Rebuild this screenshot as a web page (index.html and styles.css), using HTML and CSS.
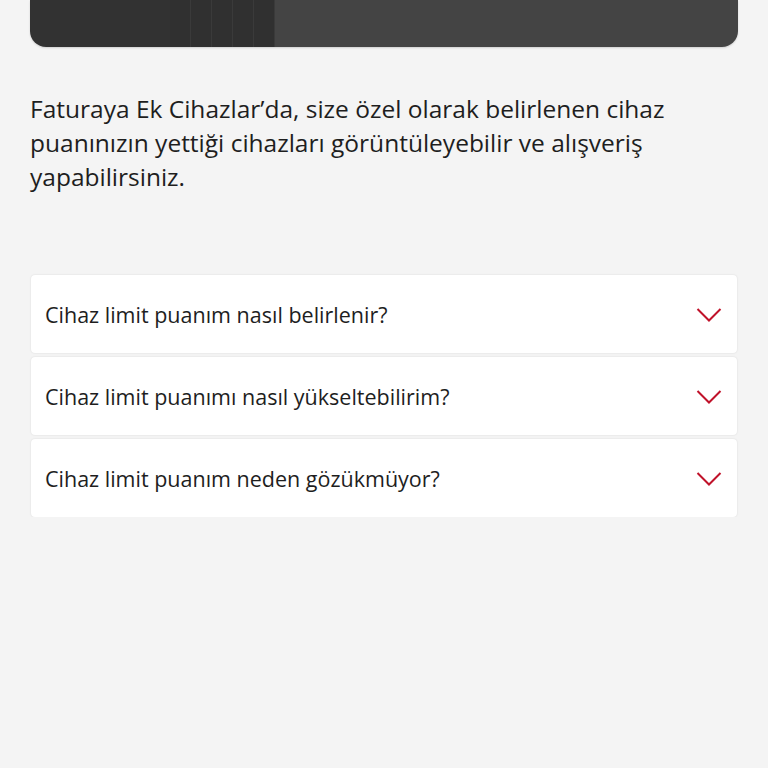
FILE: index.html
```html
<!DOCTYPE html>
<html lang="tr">
<head>
    <meta charset="UTF-8">
    <meta name="viewport" content="width=device-width, initial-scale=1.0">
    <title>Faturaya Ek Cihazlar</title>
    <link rel="stylesheet" href="styles.css">
</head>
<body>
    <div class="page">
        <div class="banner">
            <div class="banner_left"></div>
            <div class="banner_stripes">
                <span></span><span></span><span></span><span></span><span></span>
            </div>
            <div class="banner_right"></div>
        </div>
        <p class="intro">Faturaya Ek Cihazlar’da, size özel olarak belirlenen cihaz puanınızın yettiği cihazları görüntüleyebilir ve alışveriş yapabilirsiniz.</p>
        <div class="faq">
            <div class="faq_item">
                <p>Cihaz limit puanım nasıl belirlenir?</p>
                <svg class="chevron" viewBox="0 0 26 16"><path d="M1.5 2 L13 13.5 L24.5 2" /></svg>
            </div>
            <div class="faq_item">
                <p>Cihaz limit puanımı nasıl yükseltebilirim?</p>
                <svg class="chevron" viewBox="0 0 26 16"><path d="M1.5 2 L13 13.5 L24.5 2" /></svg>
            </div>
            <div class="faq_item">
                <p>Cihaz limit puanım neden gözükmüyor?</p>
                <svg class="chevron" viewBox="0 0 26 16"><path d="M1.5 2 L13 13.5 L24.5 2" /></svg>
            </div>
        </div>
    </div>
</body>
</html>
```

FILE: styles.css
```css
*{
    box-sizing: border-box;
}
body{
    margin: 0;
    background-color: #f4f4f4;
    font-family: "Open Sans", "Liberation Sans", sans-serif;
    color: #1e1e1e;
}
.page{
    padding: 0 30px;
}
.banner{
    height: 47px;
    display: flex;
    border-radius: 0 0 16px 16px;
    overflow: hidden;
    box-shadow: 0 1px 2px rgba(0, 0, 0, 0.15);
}
.banner_left{
    width: 140px;
    background-color: #323232;
}
.banner_stripes{
    width: 105px;
    display: flex;
    background-color: #303030;
}
.banner_stripes>span{
    flex: 1;
    border-right: 1px solid #3a3a3a;
}
.banner_right{
    flex: 1;
    background-color: #444;
}
.intro{
    margin: 45px 0 0;
    font-size: 24.5px;
    line-height: 34px;
}
.faq{
    margin-top: 81px;
    display: flex;
    flex-direction: column;
    gap: 4px;
}
.faq_item{
    height: 78px;
    margin: 0 1px;
    padding: 0 14px;
    display: flex;
    align-items: center;
    justify-content: space-between;
    background-color: white;
    border-radius: 4px;
    box-shadow: 0 0 2px rgba(0, 0, 0, 0.12);
}
.faq_item>p{
    margin: 0;
    font-size: 21.5px;
}
.chevron{
    width: 26px;
    height: 16px;
    margin: 2px 1px 0 0;
    fill: none;
    stroke: #c0122a;
    stroke-width: 2;
}
```
